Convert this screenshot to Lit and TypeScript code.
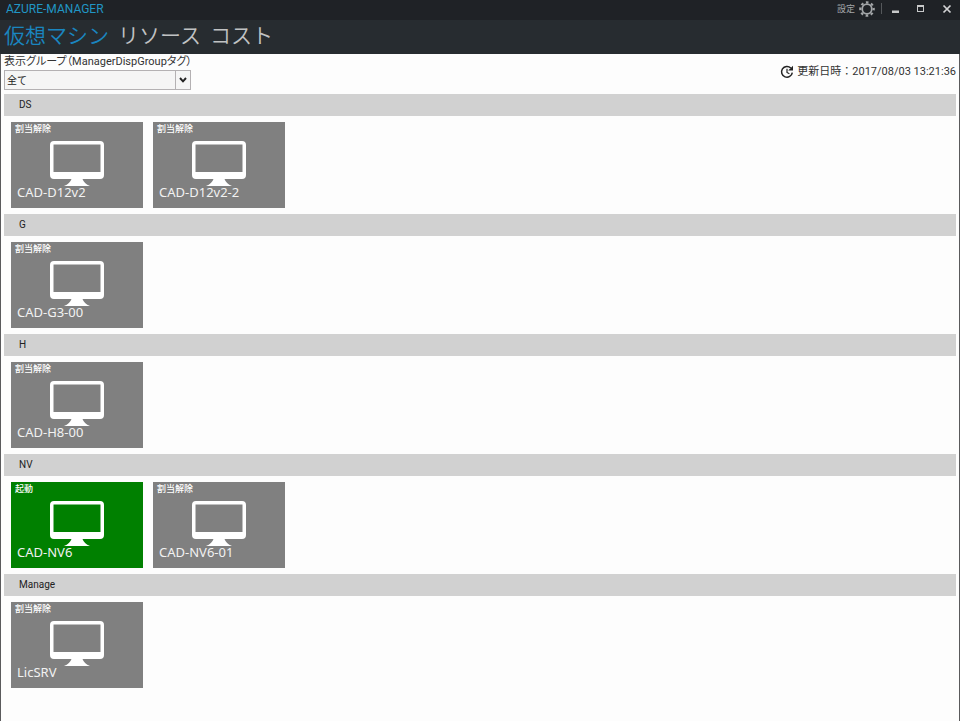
import { LitElement, html, css } from "lit";
import { customElement, property, state } from "lit/decorators.js";
import { classMap } from "lit/directives/class-map.js";

interface Machine {
  name: string;
  running?: boolean;
}

interface Group {
  name: string;
  machines: Machine[];
}

const GROUPS: Group[] = [
  { name: "DS", machines: [{ name: "CAD-D12v2" }, { name: "CAD-D12v2-2" }] },
  { name: "G", machines: [{ name: "CAD-G3-00" }] },
  { name: "H", machines: [{ name: "CAD-H8-00" }] },
  { name: "NV", machines: [{ name: "CAD-NV6", running: true }, { name: "CAD-NV6-01" }] },
  { name: "Manage", machines: [{ name: "LicSRV" }] },
];

const TABS = ["仮想マシン", "リソース", "コスト"];

@customElement("machine-tile")
class MachineTile extends LitElement {
  @property() name = "";
  @property({ type: Boolean }) running = false;

  static styles = css`
    :host {
      display: block;
    }
    .tile {
      position: relative;
      display: flex;
      flex-direction: column;
      justify-content: space-between;
      width: 132px;
      height: 86px;
      padding: 0 6px 8px 4px;
      border: 0;
      background: #808080;
      color: #fff;
      font: inherit;
      text-align: left;
      cursor: pointer;
    }
    .running {
      background: #008000;
    }
    .status {
      font-size: 9px;
      font-weight: 500;
      line-height: 14px;
    }
    .name {
      position: relative;
      padding-left: 2px;
      font-size: 13px;
      line-height: 16px;
      color: #f2f2f2;
    }
    .monitor {
      position: absolute;
      left: 39px;
      top: 19px;
      width: 54px;
      height: 46px;
    }
  `;

  render() {
    return html`
      <button class=${classMap({ tile: true, running: this.running })}>
        <svg class="monitor" viewBox="0 0 54 46" aria-hidden="true">
          <path
            fill="#fff"
            fill-rule="evenodd"
            d="M4 0H50Q54 0 54 4V34Q54 38 50 38H32.5Q34 42.5 40 45H14Q20 42.5 21.500 38H4Q0 38 0 34V4Q0 0 4 0ZM3.500 3.500V31H50.500V3.500Z"
          />
        </svg>
        <span class="status">${this.running ? "起動" : "割当解除"}</span>
        <span class="name">${this.name}</span>
      </button>
    `;
  }
}

@customElement("app-root")
class AppRoot extends LitElement {
  @state() private tab = 0;

  static styles = css`
    :host {
      display: block;
      font-family: "Noto Sans", "Noto Sans CJK JP", sans-serif;
      color: #333;
    }
    .window {
      box-sizing: border-box;
      min-height: 100vh;
      border: solid #5a5a5c;
      border-width: 0 1px;
      background: #fdfdfd;
    }
    .titlebar {
      display: flex;
      align-items: flex-start;
      justify-content: space-between;
      height: 20px;
      margin: 0 -1px;
      padding: 0 6px;
      background: #1f2226;
    }
    .title {
      margin: 0;
      font-family: Roboto, "Noto Sans CJK JP", sans-serif;
      font-size: 12px;
      font-weight: 400;
      line-height: 18px;
      color: #2196c4;
    }
    .controls {
      display: flex;
      align-items: center;
      height: 17px;
    }
    button {
      padding: 0;
      border: 0;
      background: none;
      font: inherit;
      color: inherit;
      cursor: pointer;
    }
    .settings {
      display: flex;
      align-items: center;
      gap: 4px;
      font-size: 9px;
      line-height: 16px;
      color: #a3a6a8;
    }
    .divider {
      width: 1px;
      height: 11px;
      margin: 0 6px;
      background: #55585b;
    }
    .wins {
      display: flex;
      gap: 12px;
    }
    .winbtn {
      display: flex;
      justify-content: center;
      width: 14px;
    }
    svg {
      display: block;
    }
    .tabs {
      display: flex;
      gap: 9px;
      height: 34px;
      margin: 0 -1px;
      padding: 0 4px;
      background: #272c30;
    }
    .tab {
      align-self: flex-start;
      font-size: 21px;
      font-weight: 350;
      line-height: 30px;
      color: #c0c2c3;
    }
    .active {
      color: #1a86c0;
    }
    .content {
      padding: 0 3px;
    }
    .toolbar {
      display: flex;
      align-items: center;
      justify-content: space-between;
      height: 36px;
      margin-bottom: 4px;
    }
    .filter {
      display: flex;
      flex-direction: column;
    }
    .filter label {
      font-family: Roboto, "Noto Sans CJK JP", sans-serif;
      font-size: 11px;
      line-height: 16px;
      font-feature-settings: "palt";
    }
    .combo {
      position: relative;
      width: 187px;
    }
    select {
      appearance: none;
      box-sizing: border-box;
      display: block;
      width: 100%;
      height: 20px;
      padding: 0 2px;
      border: 1px solid #b4b1b3;
      border-radius: 0;
      background: #f5f5f5;
      font: inherit;
      font-size: 10px;
      line-height: 18px;
      color: #222;
    }
    .arrow {
      position: absolute;
      right: 1px;
      top: 1px;
      display: flex;
      align-items: center;
      justify-content: center;
      width: 14px;
      height: 18px;
      border-left: 1px solid #b4b1b3;
      pointer-events: none;
    }
    .updated {
      display: flex;
      align-items: center;
      gap: 3px;
      font-family: Roboto, "Noto Sans CJK JP", sans-serif;
      font-size: 11px;
      line-height: 16px;
    }
    .group {
      margin-bottom: 6px;
    }
    .group h2 {
      margin: 0;
      padding-left: 15px;
      background: #d1d1d1;
      font-family: Roboto, "Noto Sans CJK JP", sans-serif;
      font-size: 10px;
      font-weight: 400;
      line-height: 22px;
      color: #222;
    }
    .tiles {
      display: flex;
      flex-wrap: wrap;
      gap: 10px;
      padding: 6px 7px 0;
    }
  `;

  render() {
    return html`
      <div class="window">
        <header class="titlebar">
          <h1 class="title">AZURE-MANAGER</h1>
          <div class="controls">
            <button class="settings">
              設定
              <svg width="16" height="16" viewBox="0 0 16 16" fill="none" stroke="currentColor" aria-hidden="true">
                <circle cx="8" cy="8" r="4.8" stroke-width="1.8" />
                <circle cx="8" cy="8" r="6.7" stroke-width="2.200" stroke-dasharray="2.6 2.662" stroke-dashoffset="1.3" />
              </svg>
            </button>
            <span class="divider"></span>
            <div class="wins">
              <button class="winbtn" aria-label="最小化">
                <svg width="10" height="10" viewBox="0 0 10 10" aria-hidden="true">
                  <path d="M2 6.500H9V9H2Z" fill="#c8c9ca" />
                </svg>
              </button>
              <button class="winbtn" aria-label="最大化">
                <svg width="10" height="10" viewBox="0 0 10 10" aria-hidden="true">
                  <path d="M1 1H8V8H1ZM2 3V7H7V3Z" fill="#c8c9ca" fill-rule="evenodd" />
                </svg>
              </button>
              <button class="winbtn" aria-label="閉じる">
                <svg width="10" height="10" viewBox="0 0 10 10" aria-hidden="true">
                  <path d="M1.500 1.500L8.500 8.500M8.500 1.500L1.500 8.500" stroke="#d2d3d4" stroke-width="1.7" />
                </svg>
              </button>
            </div>
          </div>
        </header>
        <nav class="tabs">
          ${TABS.map(
            (label, i) => html`
              <button class=${classMap({ tab: true, active: this.tab === i })} @click=${() => (this.tab = i)}>${label}</button>
            `
          )}
        </nav>
        <main class="content">
          <div class="toolbar">
            <div class="filter">
              <label for="group">表示グループ（ManagerDispGroupタグ）</label>
              <div class="combo">
                <select id="group">
                  <option>全て</option>
                </select>
                <span class="arrow">
                  <svg width="8" height="6" viewBox="0 0 8 6" aria-hidden="true">
                    <path d="M1 1L4 4.4L7 1" fill="none" stroke="#222" stroke-width="1.9" />
                  </svg>
                </span>
              </div>
            </div>
            <div class="updated">
              <svg width="14" height="14" viewBox="0 0 14 14" fill="none" stroke="#222" aria-hidden="true">
                <path d="M10.8 3A5.4 5.4 0 1 0 12.3 7.6" stroke-width="1.5" />
                <path d="M7 3.8V7.4L9.4 8.8" stroke-width="1.2" />
                <path d="M13 0.8V5.6H8.2Z" fill="#222" stroke="none" />
              </svg>
              <span>更新日時：2017/08/03 13:21:36</span>
            </div>
          </div>
          ${GROUPS.map(
            (g) => html`
              <section class="group">
                <h2>${g.name}</h2>
                <div class="tiles">
                  ${g.machines.map(
                    (m) => html`<machine-tile .name=${m.name} .running=${!!m.running}></machine-tile>`
                  )}
                </div>
              </section>
            `
          )}
        </main>
      </div>
    `;
  }
}
